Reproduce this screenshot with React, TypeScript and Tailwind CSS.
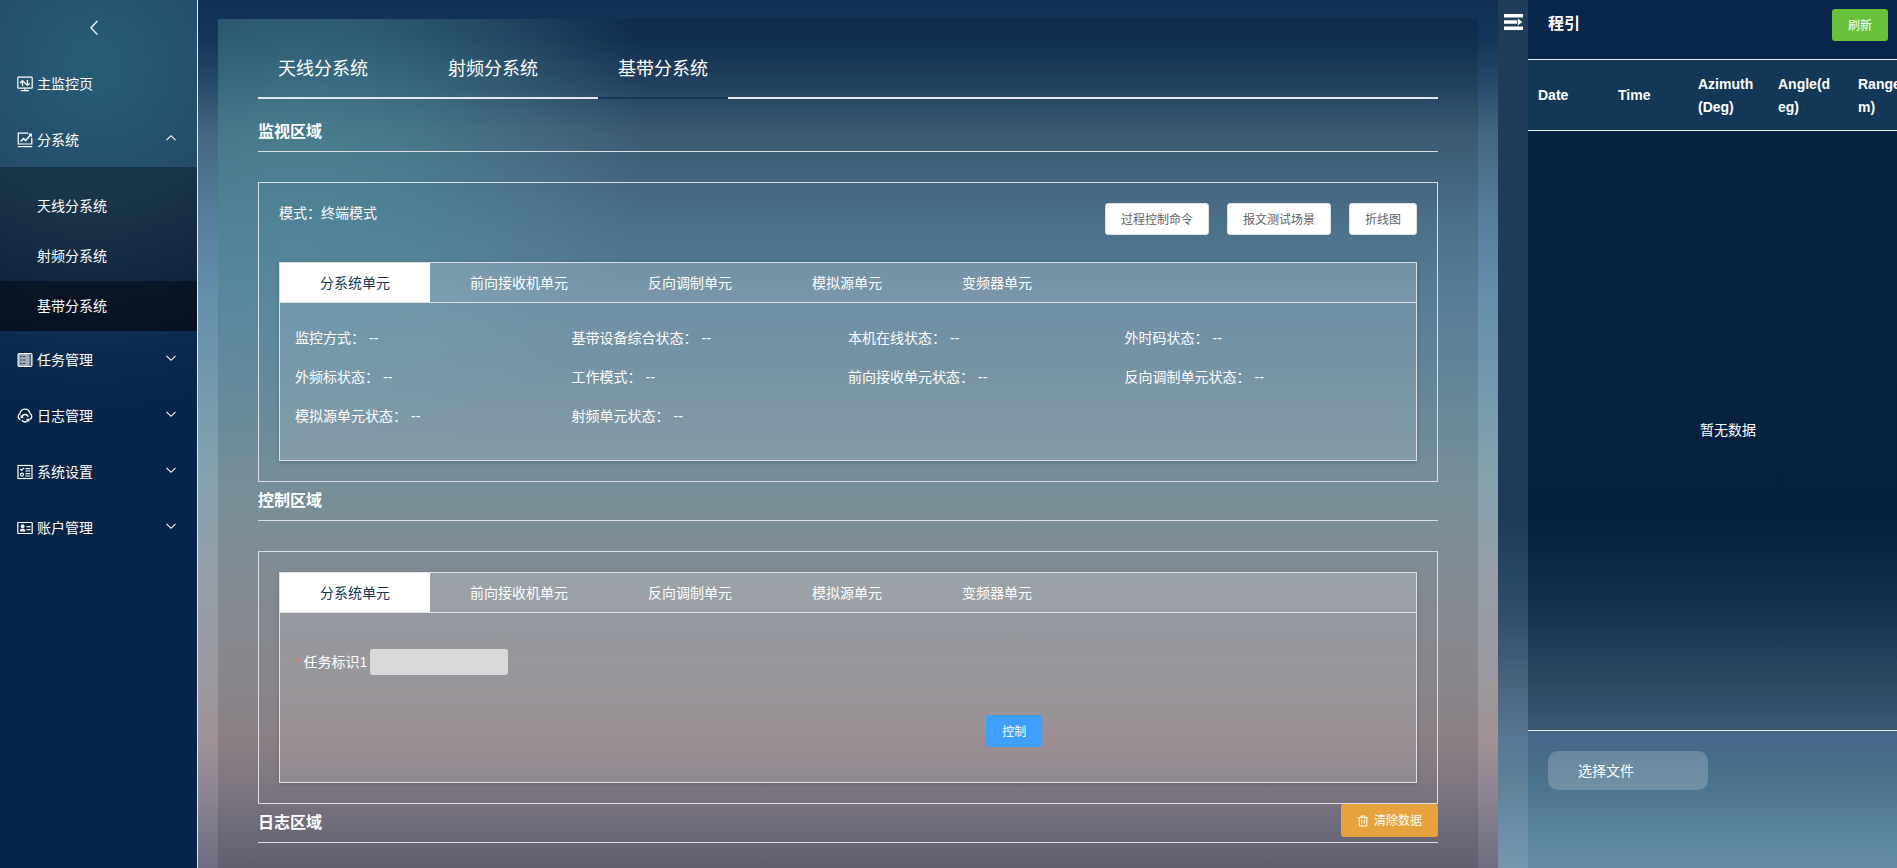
import { useState } from 'react';
import clsx from 'clsx';

interface IconProps {
  className?: string;
}

function IconMonitor({ className }: IconProps) {
  return (
    <svg className={className} viewBox="0 0 16 16" fill="none" stroke="currentColor" strokeWidth="1.2">
      <rect x="0.8" y="1.2" width="14.4" height="11" rx="0.8" />
      <path d="M8 12.400v2M4 14.600h8" />
      <path d="M5.500 10V4.600M3.200 7l2.300-2.400L10.400 9.400M10.400 4v5.400M12.800 7.200l-2.400 2.200" strokeWidth="1.3" />
    </svg>
  );
}

function IconTrend({ className }: IconProps) {
  return (
    <svg className={className} viewBox="0 0 16 16" fill="none" stroke="currentColor" strokeWidth="1.2">
      <path d="M11 1.200H1.200v10.800h13.600V6" />
      <path d="M0.800 14.600h14.400" />
      <path d="M3.600 9.600l3-3 2 2L13.400 3" strokeWidth="1.4" />
      <path d="M11 1.400h4v4z" fill="currentColor" stroke="none" />
    </svg>
  );
}

function IconTask({ className }: IconProps) {
  return (
    <svg className={className} viewBox="0 0 16 16" fill="none" stroke="currentColor">
      <rect x="1" y="1.500" width="14" height="13" rx="0.800" fill="currentColor" fillOpacity="0.6" strokeWidth="1" />
      <path d="M3.300 4.500h1.500M3.300 8h1.500M3.300 11.500h1.500M6.300 4.500h1.500M6.300 8h1.500M6.300 11.500h1.500" stroke="#082648" strokeWidth="1.2" />
      <path d="M13.200 2v12" stroke="#082648" strokeWidth="0.8" />
    </svg>
  );
}

function IconCloud({ className }: IconProps) {
  return (
    <svg className={className} viewBox="0 0 16 16" fill="none" stroke="currentColor" strokeWidth="1.3">
      <path d="M3.400 11.600A3.200 3.200 0 0 1 2.800 5.800C3.600 3 5.500 1.200 8 1.200s4.400 1.800 5.200 4.600a3.200 3.200 0 0 1-.6 5.800" />
      <path d="M5 9A3.200 3.200 0 0 1 11.200 8.800M11 11.800A3.200 3.200 0 0 1 5 12" />
      <path d="M4.200 7.200v2.200h2.200M11.800 13.600v-2.200H9.600" strokeWidth="1.1" />
    </svg>
  );
}

function IconSetting({ className }: IconProps) {
  return (
    <svg className={className} viewBox="0 0 16 16" fill="none" stroke="currentColor" strokeWidth="1.2">
      <rect x="1" y="1.500" width="14" height="13" />
      <path d="M3.400 5l1.300 1.300L7 3.800M8.400 4.600h4.800M8.400 7h4.800M8.400 9.600h4.800M8.400 12h4.800" />
      <circle cx="5" cy="10.600" r="1.500" />
    </svg>
  );
}

function IconAccount({ className }: IconProps) {
  return (
    <svg className={className} viewBox="0 0 16 16" fill="none" stroke="currentColor" strokeWidth="1.2">
      <rect x="0.800" y="2.500" width="14.400" height="11" rx="0.600" />
      <circle cx="5.600" cy="6.200" r="1.900" fill="currentColor" stroke="none" />
      <path d="M2.800 11.400c0-2 1.200-3 2.800-3s2.800 1 2.800 3z" fill="currentColor" stroke="none" />
      <path d="M9.600 6.600h4M9.600 9.600h4" />
    </svg>
  );
}

function IconChevron({ className }: IconProps) {
  return (
    <svg className={className} viewBox="0 0 12 12" fill="none" stroke="currentColor" strokeWidth="1.1">
      <path d="M1.500 3.800L6 8.300l4.500-4.500" />
    </svg>
  );
}

function IconFold({ className }: IconProps) {
  return (
    <svg className={className} viewBox="0 0 19 16" fill="currentColor">
      <path d="M0 0h19v3.600H0zM0 6.200h13v3.600H0zM0 12.400h19V16H0z" />
      <path d="M13.800 4.600L18.400 8l-4.600 3.400z" />
    </svg>
  );
}

function IconTrash({ className }: IconProps) {
  return (
    <svg className={className} viewBox="0 0 12 12" fill="none" stroke="currentColor" strokeWidth="1">
      <path d="M0.800 2.700h10.400M4 2.500V1h4v1.500M2.200 2.700v8.300h7.600V2.700M4.700 4.800v4M7.300 4.800v4" />
    </svg>
  );
}

const SUBSYSTEMS = ['天线分系统', '射频分系统', '基带分系统'];

const MENU_REST = [
  { label: '任务管理', Icon: IconTask },
  { label: '日志管理', Icon: IconCloud },
  { label: '系统设置', Icon: IconSetting },
  { label: '账户管理', Icon: IconAccount },
];

const UNITS = ['分系统单元', '前向接收机单元', '反向调制单元', '模拟源单元', '变频器单元'];

const STATUS = [
  '监控方式',
  '基带设备综合状态',
  '本机在线状态',
  '外时码状态',
  '外频标状态',
  '工作模式',
  '前向接收单元状态',
  '反向调制单元状态',
  '模拟源单元状态',
  '射频单元状态',
];

const COLUMNS = ['Date', 'Time', 'Azimuth (Deg)', 'Angle(deg)', 'Range(km)'];

interface MenuRowProps {
  label: string;
  Icon: (props: IconProps) => React.ReactNode;
  arrow?: 'up' | 'down';
}

function MenuRow({ label, Icon, arrow }: MenuRowProps) {
  return (
    <button className="flex items-center w-full h-14 pt-0.5 pl-[17px] pr-5 gap-1 hover:bg-white/5">
      <Icon className="size-4" />
      <span>{label}</span>
      {arrow && (
        <IconChevron className={clsx('size-3 ml-auto mb-1', arrow === 'up' && 'rotate-180')} />
      )}
    </button>
  );
}

function Sidebar({ current, onSelect }: { current: string; onSelect: (name: string) => void }) {
  return (
    <nav className="shrink-0 w-[198px] border-r border-[#e4e7ed] bg-[#072548] bg-[radial-gradient(circle_at_95px_65px,#275d78_0px,#244c69_140px,#15335a_240px,#0c2a4e_290px,#072548_350px)]">
      <button className="flex items-center justify-center w-full h-[55px] pr-2.5" aria-label="收起菜单">
        <svg className="w-2 h-4" viewBox="0 0 8 16" fill="none" stroke="currentColor" strokeWidth="1.3">
          <path d="M7.400 1L1 7.800l6.400 6.800" />
        </svg>
      </button>
      <MenuRow label="主监控页" Icon={IconMonitor} />
      <MenuRow label="分系统" Icon={IconTrend} arrow="up" />
      <ul className="pt-[14px] bg-black/30">
        {SUBSYSTEMS.map(name => (
          <li key={name}>
            <button
              className={clsx('block w-full h-[50px] pl-[37px] text-left', name === current && 'bg-black/40')}
              onClick={() => onSelect(name)}
            >
              {name}
            </button>
          </li>
        ))}
      </ul>
      {MENU_REST.map(item => (
        <MenuRow key={item.label} label={item.label} Icon={item.Icon} arrow="down" />
      ))}
    </nav>
  );
}

interface UnitCardProps {
  children?: React.ReactNode;
}

function UnitCard({ children }: UnitCardProps) {
  const [active, setActive] = useState(UNITS[0]);
  return (
    <div className="border border-[#dcdfe6] bg-white/13 shadow-[0_2px_4px_rgba(0,0,0,0.12),0_0_6px_rgba(0,0,0,0.04)]">
      <div className="flex border-b border-[#dcdfe6] bg-white/8" role="tablist">
        {UNITS.map(unit => (
          <button
            key={unit}
            role="tab"
            aria-selected={unit === active}
            className={clsx('h-[39px] px-10', unit === active && 'bg-white text-[#133857]')}
            onClick={() => setActive(unit)}
          >
            {unit}
          </button>
        ))}
      </div>
      {children}
    </div>
  );
}

interface SectionTitleProps {
  title: string;
  extra?: React.ReactNode;
}

function SectionTitle({ title, extra }: SectionTitleProps) {
  return (
    <div className="flex items-start justify-between h-[39px] border-b border-[#dcdfe6]">
      <h2 className="text-base leading-[38px] font-bold">{title}</h2>
      {extra}
    </div>
  );
}

function PlainButton({ children }: { children: React.ReactNode }) {
  return (
    <button className="h-8 px-[15px] pt-0.5 rounded-[3px] border border-[#dcdfe6] bg-white text-xs text-[#606266]">
      {children}
    </button>
  );
}

function GuidePanel() {
  return (
    <aside className="flex flex-col flex-1 min-w-0 overflow-hidden">
      <div className="flex items-start justify-between h-[59px] pt-[9px] pl-5 pr-[9px]">
        <h2 className="text-base leading-[30px] font-bold">程引</h2>
        <button className="h-8 px-4 pt-0.5 rounded-[3px] bg-[#67c23a] text-xs">刷新</button>
      </div>
      <div className="w-[400px] flex-1 flex flex-col border-y border-[#ebeef5]">
        <table className="w-full table-fixed bg-[#133857] border-b border-[#ebeef5]">
          <thead>
            <tr className="h-[70px]">
              {COLUMNS.map(col => (
                <th key={col} className="pt-0.5 pl-[10px] pr-3 text-left leading-[23px] font-bold break-all">
                  {col}
                </th>
              ))}
            </tr>
          </thead>
        </table>
        <div className="flex flex-1 items-center justify-center bg-black/12">暂无数据</div>
      </div>
      <div className="h-[137px] pt-5 pl-5">
        <label className="flex items-center w-40 h-[39px] pl-[30px] rounded-[10px] bg-white/20 cursor-pointer">
          选择文件
          <input type="file" className="sr-only" />
        </label>
      </div>
    </aside>
  );
}

export default function App() {
  const [current, setCurrent] = useState('基带分系统');

  return (
    <div
      lang="zh-CN"
      className="flex h-screen overflow-hidden text-sm text-white font-['Liberation_Sans','Noto_Sans_CJK_SC',sans-serif]"
    >
      <Sidebar current={current} onSelect={setCurrent} />

      <main className="flex-1 min-w-0 overflow-hidden px-5 pt-[19px] bg-[linear-gradient(180deg,#112f54_0px,#14365a_40px,#264a6b_83px,#446681_133px,#557f9d_220px,#658fab_300px,#7499af_390px,#85a3ad_480px,#8fa0aa_540px,#969ea7_590px,#9b999f_680px,#9f9197_740px,#928893_780px,#7f7b8a_825px,#6f6c80_868px)]">
        <div className="min-h-full px-10 bg-black/12 bg-[radial-gradient(circle_at_80px_110px,rgba(88,159,170,0.5)_0px,rgba(88,159,170,0.4)_120px,rgba(100,160,175,0.2)_240px,rgba(110,160,180,0)_350px)]">
          <div className="flex h-20 pt-5 gap-10 border-b-2 border-[#e4e7ed] text-lg" role="tablist">
            {SUBSYSTEMS.map(name => (
              <button
                key={name}
                role="tab"
                aria-selected={name === current}
                className={clsx(
                  'px-5 pt-0.5 -mb-0.5 border-b-2',
                  name === current ? 'border-[#133857]' : 'border-transparent'
                )}
                onClick={() => setCurrent(name)}
              >
                {name}
              </button>
            ))}
          </div>

          <section className="pt-[14px]">
            <SectionTitle title="监视区域" />
            <div className="mt-[30px] p-5 border border-[#dcdfe6]">
              <div className="flex items-start justify-between mb-[27px]">
                <p className="leading-5">模式：终端模式</p>
                <div className="flex gap-[18px]">
                  <PlainButton>过程控制命令</PlainButton>
                  <PlainButton>报文测试场景</PlainButton>
                  <PlainButton>折线图</PlainButton>
                </div>
              </div>
              <UnitCard>
                <dl className="grid grid-cols-4 px-[15px] pt-4 pb-6">
                  {STATUS.map(name => (
                    <div key={name} className="flex gap-1 leading-[39px]">
                      <dt>{name}：</dt>
                      <dd>--</dd>
                    </div>
                  ))}
                </dl>
              </UnitCard>
            </div>
          </section>

          <section>
            <SectionTitle title="控制区域" />
            <div className="mt-[30px] p-5 border border-[#dcdfe6]">
              <UnitCard>
                <form className="px-[15px] pt-9 pb-[35px]" onSubmit={e => e.preventDefault()}>
                  <div className="flex items-center gap-[3px] h-[26px]">
                    <label htmlFor="task-id" className="flex gap-[3px]">
                      <span className="text-[#f56c6c]">*</span>
                      任务标识1
                    </label>
                    <input
                      id="task-id"
                      className="w-[138px] h-[26px] px-2 rounded-[3px] bg-[#d9d9d9] text-[#606266] outline-none"
                    />
                  </div>
                  <button className="block mt-10 ml-[62.5%] h-8 px-4 pt-0.5 rounded-[3px] bg-[#409eff] text-xs">
                    控制
                  </button>
                </form>
              </UnitCard>
            </div>
          </section>

          <section>
            <SectionTitle
              title="日志区域"
              extra={
                <button className="flex items-center h-[33px] px-4 gap-[5px] rounded-[3px] bg-[#e6a23c] text-xs">
                  <IconTrash className="size-3" />
                  清除数据
                </button>
              }
            />
          </section>
        </div>
      </main>

      <div className="flex shrink-0 w-[399px] bg-[linear-gradient(180deg,#082649_0px,#072548_520px,#10334f_580px,#1b3b5c_620px,#33536f_680px,#46688a_740px,#4b728c_780px,#5a839d_830px,#648ca5_868px)]">
        <div className="w-[30px] pt-[14px] pl-[6px] bg-white/10">
          <button className="block" aria-label="展开">
            <IconFold className="w-[19px] h-4" />
          </button>
        </div>
        <GuidePanel />
      </div>
    </div>
  );
}
